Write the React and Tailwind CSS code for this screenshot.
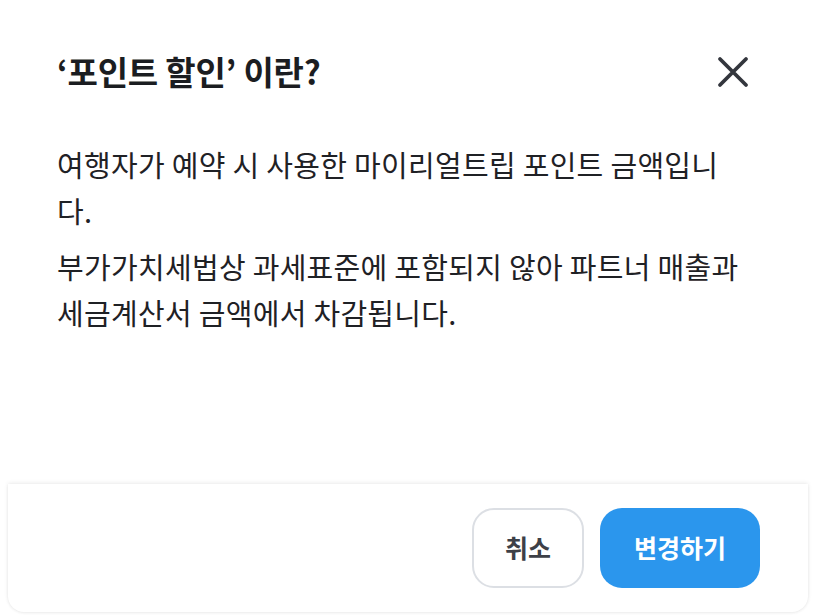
import React from "react";

const font = { fontFamily: '"Noto Sans CJK KR", "Noto Sans", sans-serif' };

function CloseIcon() {
  return (
    <svg width="32" height="32" viewBox="0 0 32 32" fill="none">
      <path
        d="M3 3L29 29M29 3L3 29"
        stroke="#33363d"
        strokeWidth="3.8"
        strokeLinecap="round"
      />
    </svg>
  );
}

export default function App() {
  return (
    <div
      className="w-[816px] h-[616px] bg-white flex flex-col overflow-hidden"
      style={font}
    >
      <div className="flex-1 px-[57px] pt-[50px]">
        <div className="flex items-center justify-between h-[44px]">
          <h1 className="text-[33px] font-bold text-[#1b1d21] tracking-[-0.2px]">
            ‘포인트 할인’ 이란?
          </h1>
          <button className="mr-[10px] flex items-center justify-center">
            <CloseIcon />
          </button>
        </div>

        <div className="mt-[47px] w-[688px] text-[29px] leading-[46px] text-[#1f2125] tracking-[0.3px]">
          <p>여행자가 예약 시 사용한 마이리얼트립 포인트 금액입니다.</p>
          <p className="mt-[10px]">
            부가가치세법상 과세표준에 포함되지 않아 파트너 매출과
            세금계산서 금액에서 차감됩니다.
          </p>
        </div>
      </div>

      <div className="mx-[8px] mb-[4px] h-[128px] bg-white rounded-b-2xl shadow-[0_-1px_4px_rgba(0,0,0,0.08),0_1px_3px_rgba(0,0,0,0.06)] flex items-start justify-end gap-4 pt-[24px] pr-[48px]">
        <button className="w-[112px] h-[80px] rounded-[22px] border-2 border-[#dcdfe4] bg-white text-[25px] font-bold text-[#3d4047]">
          취소
        </button>
        <button className="w-[160px] h-[80px] rounded-[22px] bg-[#2b96ed] text-[25px] font-bold text-white">
          변경하기
        </button>
      </div>
    </div>
  );
}
